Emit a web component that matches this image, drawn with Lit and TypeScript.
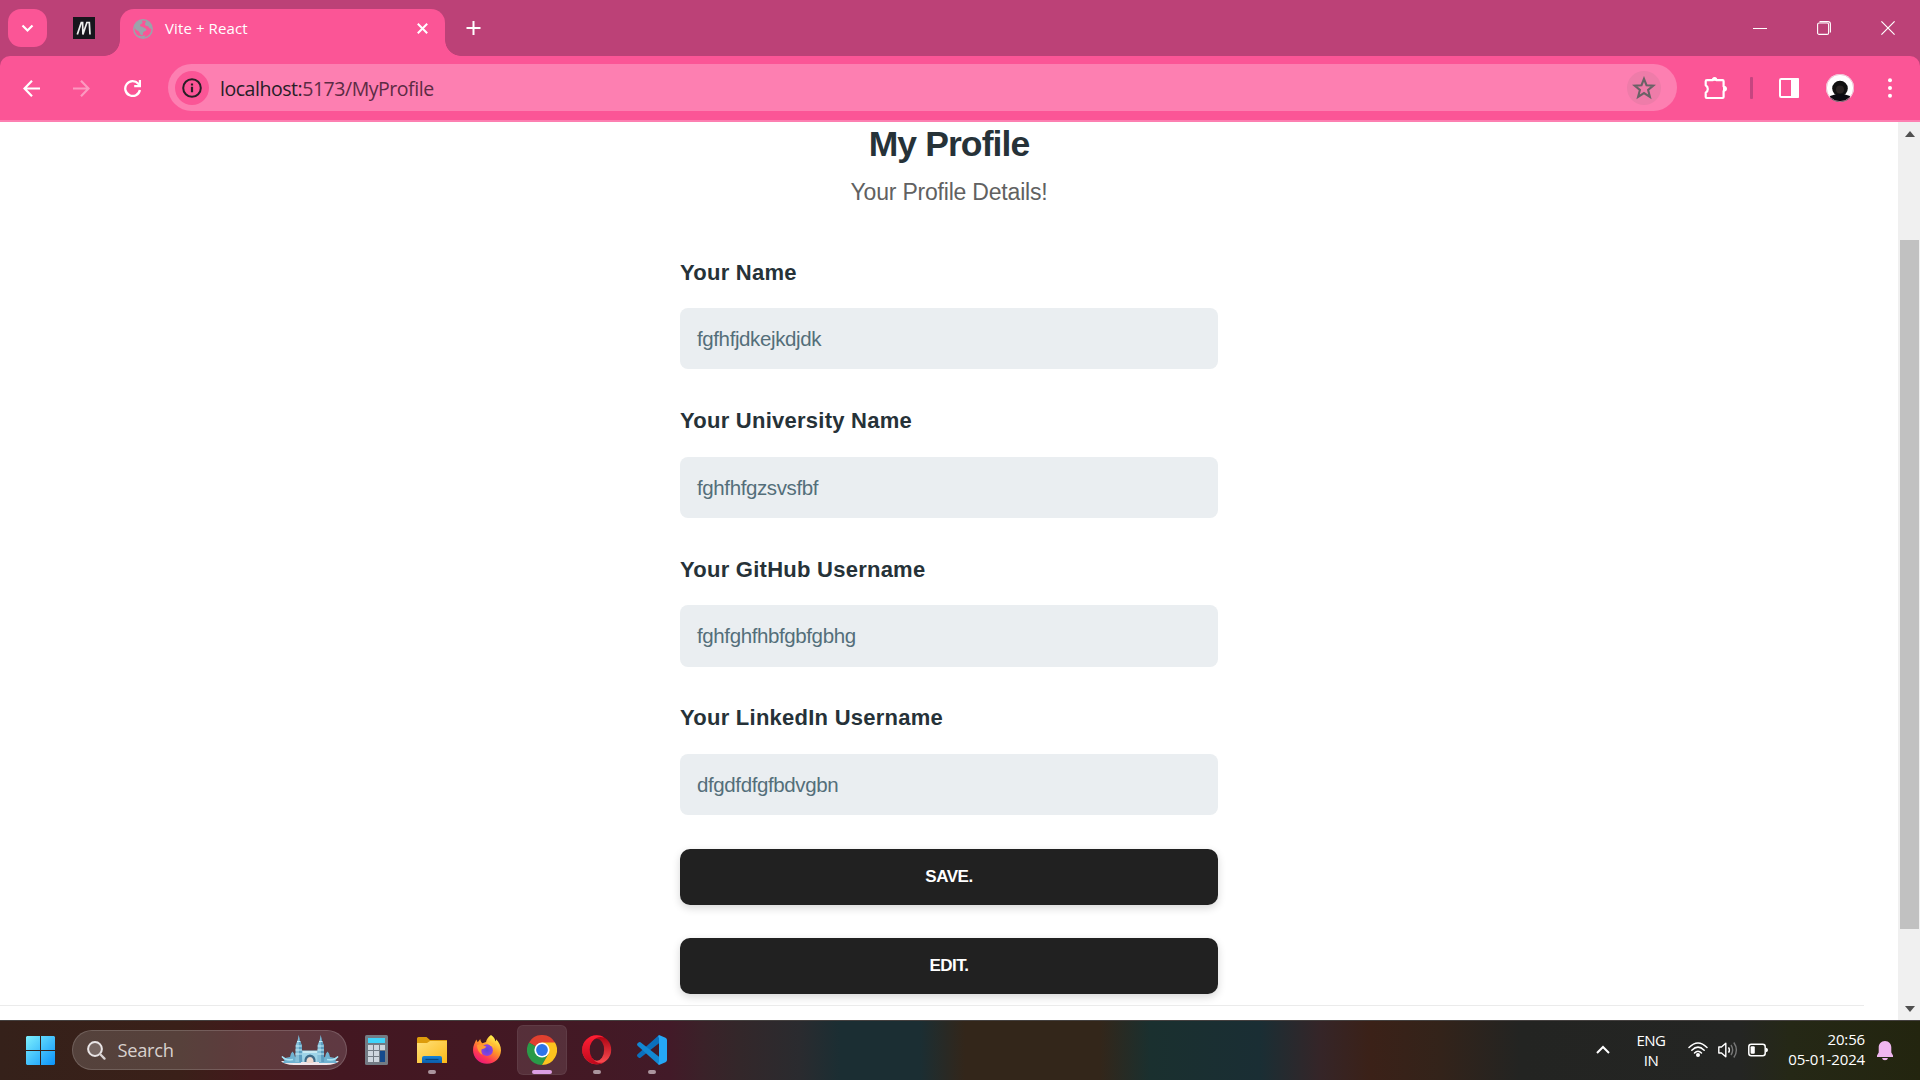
import { LitElement, html, css, svg } from "lit";
import { customElement, property } from "lit/decorators.js";

@customElement("browser-tabs")
class BrowserTabs extends LitElement {
  static styles = css`
    :host { display: flex; height: 56px; background: #bc4177; font-family: "Open Sans", "Noto Sans", sans-serif; }
    svg { display: block; }
    .menu { width: 39px; height: 38px; margin: 9px 0 0 8px; border-radius: 13px; background: #fb5596; display: grid; place-items: center; }
    .fav { margin: 17px 0 0 26px; }
    .tab { position: relative; width: 325px; height: 47px; margin: 9px 0 0 25px; background: #fb5596; border-radius: 14px 14px 0 0; box-sizing: border-box; padding: 0 17px 8px 13px; display: flex; align-items: center; color: #fff; font-size: 15px; }
    .tab::before, .tab::after { content: ""; position: absolute; bottom: 0; width: 16px; height: 16px; }
    .tab::before { left: -16px; background: radial-gradient(circle at 0 0, transparent 15.5px, #fb5596 16.2px); }
    .tab::after { right: -16px; background: radial-gradient(circle at 100% 0, transparent 15.5px, #fb5596 16.2px); }
    .name { flex: 1; margin-left: 12px; line-height: 20px; padding-bottom: 2px; letter-spacing: 0.1px; }
    .plus { margin: 20px 0 0 21px; }
    .controls { margin-left: auto; display: flex; gap: 50px; padding: 21px 25px 0 0; }
  `;
  render() {
    return html`
      <div class="menu"><svg width="13" height="9" viewBox="0 0 13 9"><path d="M1.5 1.5 6.5 6.5 11.5 1.5" fill="none" stroke="#fff" stroke-width="2.2"/></svg></div>
      <svg class="fav" width="22" height="22" viewBox="0 0 22 22"><rect width="22" height="22" fill="#17151c"/><path d="M4.3 17.5 8.3 5.5 9.6 5.5 9.9 17.5 13.9 5.5 16.3 5.5 17 17.5" fill="none" stroke="#eee" stroke-width="1.7"/></svg>
      <div class="tab">
        <svg width="20" height="20" viewBox="0 0 20 20"><circle cx="10" cy="10" r="9.2" fill="none" stroke="#9ba3ab" stroke-width="1.5"/><path d="M1.4 8.2C2 4.5 5.5 1.2 9 1 8.5 2.5 10.5 3.2 9 4.5 8 5.5 7.3 5 7 6.5 7.2 7.7 8.8 7.5 9.8 8 11.5 9 13 9.2 13.4 10.8 13.3 12.8 10.5 12 10 14 10.5 15.5 9.3 16.5 8.5 16.3 6.5 15.7 7 13.2 5.5 12.2 4.3 11.3 2.3 11 1.4 8.2Z" fill="#9ba3ab"/><path d="M13 1.7C12.8 3.5 11.3 4.8 12.3 6.3 13.5 7.5 15 6.5 15.7 8 16.2 10 18 9.5 19 10.2 19 5.5 16.5 2.8 13 1.7ZM3 16 8 17.2 12.8 16.2 11 19 6 18.3Z" fill="#9ba3ab"/></svg>
        <span class="name">Vite + React</span>
        <svg width="11" height="11" viewBox="0 0 11 11"><path d="M.8 .8 10.2 10.2M10.2 .8 .8 10.2" stroke="#fff" stroke-width="2"/></svg>
      </div>
      <svg class="plus" width="15" height="16" viewBox="0 0 15 16"><path d="M7.5 1V15M.5 8H14.5" stroke="#fff" stroke-width="2"/></svg>
      <div class="controls">
        <svg width="14" height="15" viewBox="0 0 14 15"><path d="M0 7.5H14" stroke="#fff"/></svg>
        <svg width="14" height="14" viewBox="0 0 14 14"><rect x=".6" y="2" width="11" height="11.4" rx="1.5" fill="none" stroke="#fff" stroke-width="1.1"/><path d="M2.5 .6H11Q13.4 .6 13.4 3V11.5" fill="none" stroke="#fff" stroke-width="1.1"/></svg>
        <svg width="14" height="14" viewBox="0 0 14 14"><path d="M.4 .4 13.6 13.6M13.6 .4 .4 13.6" stroke="#fff" stroke-width="1.2"/></svg>
      </div>`;
  }
}

@customElement("browser-toolbar")
class BrowserToolbar extends LitElement {
  static styles = css`
    :host { display: block; background: #bc4177; font-family: "Open Sans", "Noto Sans", sans-serif; }
    .bar { display: flex; align-items: center; height: 66px; box-sizing: border-box; padding: 0 25px 0 22.5px; background: #fb5596; border-bottom: 2px solid #fd7fb1; border-radius: 10px 10px 0 0; }
    svg { display: block; flex: none; }
    .nav { display: flex; gap: 33px; padding-top: 1px; }
    .nav svg:last-child { margin-left: 1px; }
    .omni { width: 1509px; height: 47px; margin: 0 0 1px 27.5px; border-radius: 24px; background: #fd7fb1; display: flex; align-items: center; box-sizing: border-box; padding: 0 16px 0 7px; }
    .circle { width: 34px; height: 34px; border-radius: 50%; display: grid; place-items: center; background: #fb5596; }
    .star { background: #ee7ca9; margin-left: auto; }
    .url { margin-left: 11px; padding-top: 2px; font-size: 19.5px; letter-spacing: -0.46px; line-height: 26px; color: #5c2b44; white-space: nowrap; }
    .host { color: #262027; }
    .puzzle { margin: 0 0 1px 27px; }
    .sep { width: 3px; height: 22px; margin: 0 26px 0 22px; border-radius: 1px; background: #c54580; }
    .avatar { margin-left: 27px; }
    .dots { margin-left: 34px; }
  `;
  render() {
    return html`<div class="bar">
      <div class="nav">
        <svg width="17" height="17" viewBox="0 0 17 17"><path d="M17 8.5H2M9 .8 1.5 8.5 9 16.2" fill="none" stroke="#fff" stroke-width="2.2"/></svg>
        <svg width="17" height="17" viewBox="0 0 17 17" opacity=".4"><path d="M0 8.5H15M8 .8 15.5 8.5 8 16.2" fill="none" stroke="#fff" stroke-width="2.2"/></svg>
        <svg width="17" height="17" viewBox="0 0 17 17"><path d="M15.9 10.1A7.4 7.4 0 1 1 14.3 3.8L16 5.6" fill="none" stroke="#fff" stroke-width="2.3"/><path d="M17 0V7.2H10.2V5H14.8V0Z" fill="#fff"/></svg>
      </div>
      <div class="omni">
        <div class="circle"><svg width="20" height="20" viewBox="0 0 20 20"><circle cx="10" cy="10" r="8.8" fill="none" stroke="#271f26" stroke-width="2"/><path d="M10 8.7V14.3M10 5.4V7.4" stroke="#271f26" stroke-width="2.2"/></svg></div>
        <span class="url"><span class="host">localhost:</span>5173/MyProfile</span>
        <div class="circle star"><svg width="24" height="24" viewBox="0 0 24 24"><path d="M12 2.8 14.5 9.2 21.4 9.6 16.1 14 17.9 20.8 12 17 6.1 20.8 7.9 14 2.6 9.6 9.5 9.2Z" fill="none" stroke="#6a6266" stroke-width="2.1"/></svg></div>
      </div>
      <svg class="puzzle" width="24" height="24" viewBox="0 0 24 24"><path d="M3 4.2H8.6A2.3 2.3 0 0 1 12.6 4.2H18.6Q19.6 4.2 19.6 5.2V10.6A2.4 2.4 0 0 1 19.6 15V21Q19.6 22 18.6 22H2.7Q1.7 22 1.7 21V16.6A4.3 4.3 0 0 0 1.7 9.2V5.2Q1.7 4.2 3 4.2Z" fill="none" stroke="#fff" stroke-width="2.2" stroke-linejoin="round"/><path d="M7.6 4.8Q7.8 1 10.6 1 13.4 1 13.6 4.8ZM19 9.8Q23 10 23 12.8 23 15.6 19 15.8Z" fill="#fff"/></svg>
      <div class="sep"></div>
      <svg width="20" height="20" viewBox="0 0 20 20"><rect x="1" y="1" width="18" height="18" rx="1.2" fill="none" stroke="#fff" stroke-width="2"/><rect x="12" y="0" width="8" height="20" rx="1" fill="#fff"/></svg>
      <svg class="avatar" width="28" height="28" viewBox="0 0 28 28"><defs><clipPath id="av"><circle cx="14" cy="14" r="14"/></clipPath></defs><g clip-path="url(#av)"><rect width="28" height="28" fill="#fff"/><circle cx="14" cy="14.5" r="7.8" fill="#111"/><path d="M4 28V22Q14 18 24 22V28Z" fill="#0b0b11"/><circle cx="14" cy="15.5" r="4" fill="#2a2423"/></g><circle cx="14" cy="14" r="13.6" fill="none" stroke="#e8a0bd" stroke-width=".7"/></svg>
      <svg class="dots" width="5" height="20" viewBox="0 0 5 20"><g fill="#fff"><circle cx="2" cy="2.2" r="2"/><circle cx="2" cy="10" r="2"/><circle cx="2" cy="17.8" r="2"/></g></svg>
    </div>`;
  }
}

@customElement("profile-field")
class ProfileField extends LitElement {
  @property() label = "";
  @property() value = "";
  static styles = css`
    :host { display: flex; flex-direction: column; height: 148.6px; font-family: "Liberation Sans", Arial, sans-serif; }
    label { font-weight: 700; font-size: 22px; letter-spacing: 0.25px; line-height: 26px; color: #263238; margin-bottom: 22.5px; white-space: nowrap; }
    .box { height: 61.2px; box-sizing: border-box; border-radius: 8px; background: #eaeef1; color: #546e7a; font-size: 20.5px; letter-spacing: -0.39px; padding: 1px 17px 0; display: flex; align-items: center; }
  `;
  render() {
    return html`<label>${this.label}</label><div class="box">${this.value}</div>`;
  }
}

@customElement("profile-page")
class ProfilePage extends LitElement {
  static styles = css`
    :host { display: flex; height: 898px; background: #fff; font-family: "Liberation Sans", Arial, sans-serif; overflow: hidden; }
    .page { flex: 1; display: flex; flex-direction: column; }
    .form { width: 538px; margin: 0 auto; display: flex; flex-direction: column; }
    h1 { margin: 1px 0 0; font-size: 35.5px; line-height: 42px; text-align: center; color: #263238; letter-spacing: -0.9px; }
    .sub { margin: 13px 0 53.7px; font-size: 23px; letter-spacing: -0.2px; line-height: 28px; text-align: center; color: #616161; }
    .btn { height: 56px; flex: none; border-radius: 10px; background: #212121; color: #fff; font-weight: 700; font-size: 17px; letter-spacing: -0.5px; display: grid; place-items: center; box-shadow: 0 3px 8px rgba(0,0,0,.16); margin-bottom: 33px; }
    .btn.first { margin-top: -5.1px; }
    .btn.last { margin-bottom: 11px; }
    .rule { width: 1864px; height: 1px; background: #ebebeb; }
    .scroll { width: 22px; background: #f0f0f0; display: flex; flex-direction: column; align-items: center; }
    .up, .down { border: 6px solid transparent; width: 0; height: 0; box-sizing: border-box; }
    .up { border-width: 0 5.5px 6px; border-bottom-color: #505050; margin: 9px 0 103px 1px; }
    .down { border-width: 6px 5.5px 0; border-top-color: #505050; margin: 77px 0 0 1px; }
    .thumb { width: 19px; height: 689px; background: #c1c1c1; margin-left: 1px; }
  `;
  fields = [
    ["Your Name", "fgfhfjdkejkdjdk"],
    ["Your University Name", "fghfhfgzsvsfbf"],
    ["Your GitHub Username", "fghfghfhbfgbfgbhg"],
    ["Your LinkedIn Username", "dfgdfdfgfbdvgbn"],
  ];
  render() {
    return html`
      <div class="page">
        <div class="form">
          <h1>My Profile</h1>
          <div class="sub">Your Profile Details!</div>
          ${this.fields.map(([l, v]) => html`<profile-field .label=${l} .value=${v}></profile-field>`)}
          <div class="btn first">SAVE.</div>
          <div class="btn last">EDIT.</div>
        </div>
        <div class="rule"></div>
      </div>
      <div class="scroll"><div class="up"></div><div class="thumb"></div><div class="down"></div></div>`;
  }
}

const tower = (x: number) => svg`<g transform="translate(${x} 0)"><path d="M4 0 5 5 7 10 7.5 27H.5L1 10 3 5Z" fill="#86c0d9"/><path d="M4 0 5 5 7 10 7.5 27H4.5Z" fill="#5b9dc0"/><path d="M1 11H7M.8 15H7.2M.6 19H7.4M2.3 6.5H5.7" stroke="#c4ecf7" stroke-width="1"/></g>`;

const apps = [
  { dot: "", icon: svg`<svg width="23" height="30" viewBox="0 0 23 30"><rect width="23" height="30" rx="1.5" fill="#737b84"/><rect x="3" y="3" width="17" height="5" fill="#3fd4fa"/><g fill="#cfd6de"><rect x="3" y="10" width="5" height="5"/><rect x="9" y="10" width="5" height="5"/><rect x="15" y="10" width="5" height="5"/><rect x="3" y="16" width="5" height="5"/><rect x="9" y="16" width="5" height="5"/><rect x="3" y="22" width="5" height="5"/><rect x="9" y="22" width="5" height="5"/></g><rect x="15" y="16" width="5" height="11" fill="#154a8c"/></svg>` },
  { dot: "dot", icon: svg`<svg width="30" height="30" viewBox="0 0 30 30"><defs><linearGradient id="fo" x2="1" y2="1"><stop stop-color="#ffe07a"/><stop offset="1" stop-color="#fbb917"/></linearGradient><linearGradient id="fb" x2="0" y2="1"><stop stop-color="#1683d8"/><stop offset="1" stop-color="#0c5ca8"/></linearGradient></defs><path d="M0 3.5Q0 2 1.5 2H9.5L13 5H30V12H0Z" fill="#dd9c0c"/><path d="M0 8H10L13 6H30V28H0Z" fill="url(#fo)"/><path d="M5 28V23Q5 21 7 21H23Q25 21 25 23V28Z" fill="url(#fb)"/><path d="M8.5 24.5H21.5" stroke="#06457f" stroke-width="1.2"/></svg>` },
  { dot: "", icon: svg`<svg width="30" height="30" viewBox="0 0 30 30"><defs><linearGradient id="ff" x1=".85" y1="0" x2=".25" y2="1"><stop offset=".1" stop-color="#fff04a"/><stop offset=".45" stop-color="#ff9728"/><stop offset=".75" stop-color="#ff3a52"/><stop offset="1" stop-color="#e5147d"/></linearGradient><radialGradient id="fp"><stop stop-color="#5b45dd"/><stop offset="1" stop-color="#9142dd"/></radialGradient></defs><path d="M19 0C22 2 23 4 23.3 6.2 24.2 6 24 4.7 24 4.2 27 7 29 11 29 15.5 28.6 23 23 28.8 15 28.8 7 28.8 1 22.5 1 15 1 10.5 2.8 8 4.3 4.5 5 5.5 5.2 6.4 5.6 7.3 6.5 6.3 8 4.3 8.2 4 8.7 6 9 7.4 10.5 8.2L14 7C14.5 4 16.3 2.2 19 0Z" fill="url(#ff)"/><circle cx="15" cy="15.2" r="5.9" fill="url(#fp)"/><path d="M5 10Q8 8.5 11 10.2L14.5 11.7Q12.5 14 9.5 14.3 8.5 17.5 10.5 20Q5 17 5 10Z" fill="#ff9a32"/><path d="M14 7Q21 7 22.5 13.5 21.5 11 18.5 10.8Z" fill="#ffc234"/></svg>` },
  { dot: "active", icon: svg`<svg width="30" height="30" viewBox="0 0 30 30"><path d="M15 15 2 7.5A15 15 0 0 1 28 7.5Z" fill="#e0402f"/><path d="M15 15 2 7.5A15 15 0 0 0 15 30L21.5 18.7Z" fill="#2a9a48"/><path d="M15 7.5H28A15 15 0 0 1 15 30L21.5 18.7Z" fill="#fcc31e"/><circle cx="15" cy="15" r="7.6" fill="#fff"/><circle cx="15" cy="15" r="5.9" fill="#2d74e8"/></svg>` },
  { dot: "dot", icon: svg`<svg width="30" height="30" viewBox="0 0 30 30"><defs><linearGradient id="op" x2="0" y2="1"><stop stop-color="#ff2035"/><stop offset="1" stop-color="#c0081c"/></linearGradient><linearGradient id="oq" x2="0" y2="1"><stop stop-color="#a80010"/><stop offset="1" stop-color="#ff5054"/></linearGradient></defs><ellipse cx="14.7" cy="14.8" rx="14.5" ry="14.5" fill="url(#oq)"/><path d="M14.7 .3A14.5 14.5 0 1 0 14.7 29.3C17.7 29.3 20 28.5 22 27 18 28.8 14 27.5 12 25 7 21 7 9 12 4.8 14.5 1.8 19 1.5 22 2.8 20 1 17.7 .3 14.7 .3Z" fill="url(#op)"/><ellipse cx="14.9" cy="14.8" rx="7.2" ry="11" fill="#431925"/></svg>` },
  { dot: "dot", icon: svg`<svg width="30" height="30" viewBox="0 0 30 30"><path d="M22 0V8.2L3.5 22.8Q2.4 23.4 1.5 22.5L.4 21.4Q-.4 20.3 .6 19.3Z" fill="#0b70bd"/><path d="M.6 10.7Q-.4 9.7 .4 8.6L1.5 7.5Q2.4 6.6 3.5 7.2L22 21.8V30Z" fill="#1287d2"/><path d="M22 0 28.5 2.8Q30 3.5 30 5V25Q30 26.5 28.5 27.2L22 30Q20.5 28.5 22 27V3Q20.5 1.5 22 0Z" fill="#25a7f5"/></svg>` },
];

@customElement("task-bar")
class TaskBar extends LitElement {
  static styles = css`
    :host { display: flex; box-sizing: border-box; height: 60px; border-top: 1px solid #44403f; color: #fff; font-family: "Open Sans", "Noto Sans", sans-serif; font-size: 15px;
      background: linear-gradient(90deg, #35211a 0, #3a2019 180px, #43191c 250px, #431721 340px, #431925 600px, #421a28 670px, #3a2229 705px, #33272a 740px, #2a2b2f 800px, #1b2e33 840px, #1b2e33 920px, #33261a 965px, #33261a 1100px, #1a302f 1150px, #1a2e34 1260px, #352528 1320px, #3b2118 1370px, #33231a 1440px, #232422 1520px, #242523 1740px, #252816 1790px, #23250f 1920px); }
    svg { display: block; flex: none; }
    .start { margin: 15px 17px 0 26px; }
    .search { width: 275px; height: 40px; margin-top: 9px; box-sizing: border-box; border-radius: 20px; background: rgba(255,255,255,.15); border: 1px solid rgba(255,255,255,.16); display: flex; align-items: center; padding: 0 7px 0 14px; }
    .search span { margin-left: 11.5px; flex: 1; font-size: 18.3px; letter-spacing: -0.3px; color: #d9d1ce; line-height: 24px; }
    .apps { display: grid; grid-template-columns: repeat(6, 55px); margin-left: 2.5px; }
    .slot { width: 50px; height: 50px; margin: 4px auto 0; box-sizing: border-box; border-radius: 6px; display: flex; flex-direction: column; align-items: center; padding-top: 10px; border: 0; }
    .slot:first-child { padding-right: 1px; }
    .slot.active { background: rgba(255,255,255,.1); box-shadow: inset 0 0 0 1px rgba(255,255,255,.06); }
    .mark { width: 8px; height: 4px; border-radius: 2px; background: #ab959e; margin-top: 5px; }
    .active .mark { width: 20px; background: #dd9fe3; }
    .tray { margin-left: auto; display: flex; }
    .chev { margin-top: 24px; }
    .lang { width: 40px; margin: 9px 0 0 21px; text-align: center; line-height: 20px; letter-spacing: -0.5px; }
    .status { display: flex; gap: 10px; margin: 20px 0 0 17px; }
    .clock { width: 97px; text-align: right; line-height: 20px; margin-top: 8px; letter-spacing: -0.15px; }
    .bell { margin: 20px 27px 0 12px; }
  `;
  render() {
    return html`
      <svg class="start" width="29" height="29" viewBox="0 0 29 29"><defs><linearGradient id="w" gradientUnits="userSpaceOnUse" x2="29" y2="29"><stop stop-color="#7df0fd"/><stop offset="1" stop-color="#0b93fb"/></linearGradient></defs><path d="M1 0H14V14H0V1ZM15 0H28L29 1V14H15ZM0 15H14V29H1L0 28ZM15 15H29V28L28 29H15Z" fill="url(#w)"/></svg>
      <div class="search">
        <svg width="19" height="19" viewBox="0 0 19 19"><circle cx="8" cy="8" r="6.9" fill="rgba(255,255,255,.2)" stroke="#e9e5e6" stroke-width="2"/><path d="M13 13 17.5 17.6" stroke="#d8d2d2" stroke-width="2.3" stroke-linecap="round"/></svg>
        <span>Search</span>
        <svg width="58" height="30" viewBox="0 0 58 30"><path d="M0 26H58Q55 29.7 45 30H13Q3 29.7 0 26Z" fill="#efe6ea"/><path d="M2 27.5 3.5 25.5 .5 21 4 23 9 22 10 18.5 11.5 16.5 13 18.5 14 22 20 24V28H2ZM56 27.5 54.5 25.5 57.5 21 54 23 49 22 48 18.5 46.5 16.5 45 18.5 44 22 38 24V28H56Z" fill="#6fb2d1"/><path d="M1 21.5Q5 26 12 24.5M57 21.5Q53 26 46 24.5" fill="none" stroke="#a9e3f3" stroke-width="1.5"/><path d="M20 15.5H38V27H20Z" fill="#9ed4e8"/><path d="M22 17H36" stroke="#d6f0f6" stroke-width="1.5"/><path d="M23.5 27Q23 20 29 19.5 35 20 34.5 27Z" fill="#3e6a87"/><path d="M25.5 28Q25 22.5 29 22 33 22.5 32.5 28Z" fill="#eed9cf"/>${tower(13.7)}${tower(35.7)}</svg>
      </div>
      <div class="apps">${apps.map((a) => html`<div class="slot ${a.dot}">${a.icon}${a.dot ? html`<div class="mark"></div>` : ""}</div>`)}</div>
      <div class="tray">
        <svg class="chev" width="14" height="10" viewBox="0 0 14 10"><path d="M1 8 7 2 13 8" fill="none" stroke="#fff" stroke-width="2"/></svg>
        <div class="lang">ENG<br />IN</div>
        <div class="status">
          <svg width="20" height="17" viewBox="0 0 20 17"><g fill="none" stroke="#fff" stroke-width="1.5" stroke-linecap="round"><path d="M1 6.5Q10-2.7 19 6.5"/><path d="M3.8 9.2Q10 3 16.2 9.2"/><path d="M6.5 12Q10 8.4 13.5 12"/></g><circle cx="10" cy="14" r="2" fill="#fff"/></svg>
          <svg width="20" height="18" viewBox="0 0 20 18"><path d="M.8 6H3.5L7.8 2.2V15.8L3.5 12H.8Z" fill="none" stroke="#fff" stroke-width="1.4" stroke-linejoin="round"/><path d="M10.5 6.3Q12.4 9 10.5 11.7" fill="none" stroke="#fff" stroke-width="1.4"/><path d="M13 4Q16.3 9 13 14M15.8 1.5Q21 9 15.8 16.5" fill="none" stroke="#777" stroke-width="1.4"/></svg>
          <svg width="20" height="18" viewBox="0 0 20 18"><rect x=".8" y="3.3" width="16.4" height="11.4" rx="2.5" fill="none" stroke="#fff" stroke-width="1.5"/><rect x="2.6" y="5.2" width="4.2" height="7.6" rx="1" fill="#fff"/><path d="M18 6.7Q20 7 20 9 20 11 18 11.3Z" fill="#fff"/></svg>
        </div>
        <div class="clock">20:56<br />05-01-2024</div>
        <svg class="bell" width="16" height="20" viewBox="0 0 16 20"><path d="M8 0C12 0 14.3 3 14.3 6.5V11.5L16 14.5V16H0V14.5L1.7 11.5V6.5C1.7 3 4 0 8 0ZM5 17H11Q10.5 19.3 8 19.3 5.5 19.3 5 17Z" fill="#efb6ef"/></svg>
      </div>`;
  }
}

@customElement("app-root")
class AppRoot extends LitElement {
  static styles = css`
    :host { display: flex; flex-direction: column; width: 1920px; height: 1080px; overflow: hidden; }
  `;
  render() {
    return html`<browser-tabs></browser-tabs><browser-toolbar></browser-toolbar><profile-page></profile-page><task-bar></task-bar>`;
  }
}
